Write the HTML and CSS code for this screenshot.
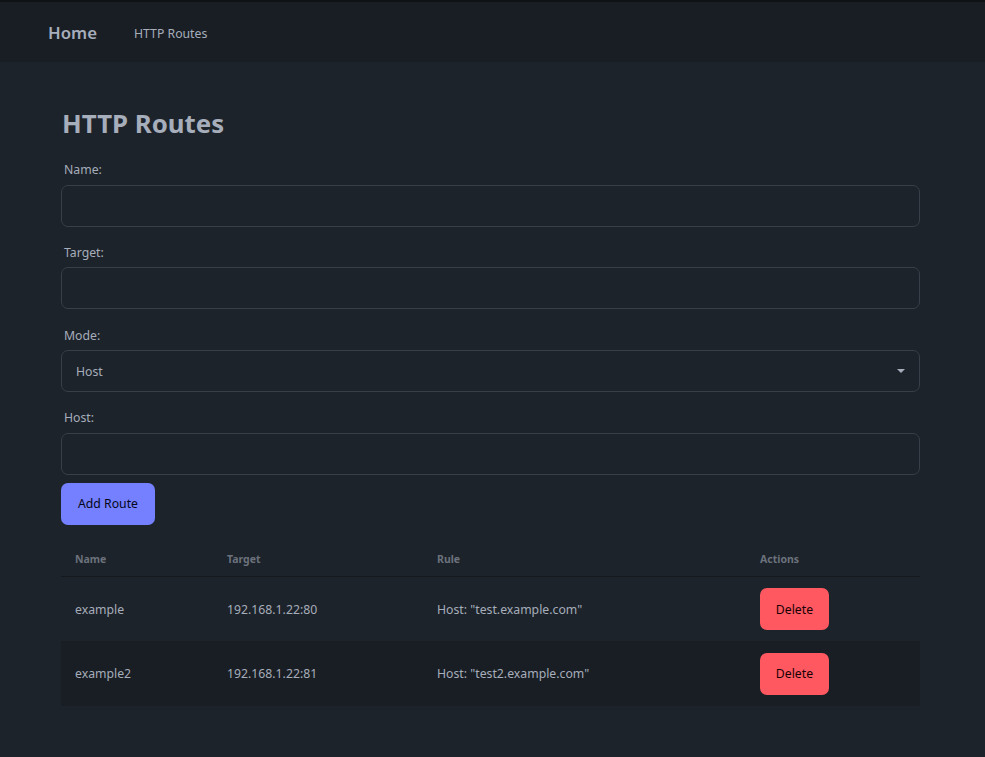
FILE: index.html
```html
<!DOCTYPE html>
<html lang="en">
<head>
<meta charset="utf-8">
<title>HTTP Routes</title>
<link rel="stylesheet" href="styles.css">
</head>
<body>
<header class="navbar">
  <a class="brand" href="#">Home</a>
  <a class="nav-link" href="#">HTTP Routes</a>
</header>
<main class="content">
  <h1 class="title">HTTP Routes</h1>
  <form class="route-form">
    <label class="field-label" for="name">Name:</label>
    <input class="field-input" id="name" type="text">
    <label class="field-label" for="target">Target:</label>
    <input class="field-input" id="target" type="text">
    <label class="field-label" for="mode">Mode:</label>
    <div class="field-input select">
      <span>Host</span>
      <svg class="caret" width="8" height="5" viewBox="0 0 8 5"><path d="M0 0h8L4 4z" fill="#a6adbb"/></svg>
    </div>
    <label class="field-label" for="host">Host:</label>
    <input class="field-input" id="host" type="text">
    <div class="actions-row">
      <button class="btn btn-primary" type="button">Add Route</button>
    </div>
  </form>
  <table class="routes">
    <thead>
      <tr>
        <th class="col-name">Name</th>
        <th class="col-target">Target</th>
        <th class="col-rule">Rule</th>
        <th class="col-actions">Actions</th>
      </tr>
    </thead>
    <tbody>
      <tr>
        <td>example</td>
        <td>192.168.1.22:80</td>
        <td>Host: "test.example.com"</td>
        <td><button class="btn btn-error" type="button">Delete</button></td>
      </tr>
      <tr class="alt">
        <td>example2</td>
        <td>192.168.1.22:81</td>
        <td>Host: "test2.example.com"</td>
        <td><button class="btn btn-error" type="button">Delete</button></td>
      </tr>
    </tbody>
  </table>
</main>
</body>
</html>
```
FILE: styles.css
```css
* { box-sizing: border-box; }
html, body { margin: 0; padding: 0; }
body {
  background: #1d232a;
  color: #a6adbb;
  font-family: "Noto Sans", "Open Sans", sans-serif;
  font-size: 12.25px;
  min-height: 757px;
}
.navbar {
  height: 62px;
  background: #191e24;
  border-top: 2px solid #0f1215;
  display: flex;
  align-items: center;
  padding: 0 0 0 48px;
}
.brand {
  color: #a6adbb;
  text-decoration: none;
  font-size: 16.8px;
  font-weight: 600;
  margin-right: 37px;
}
.nav-link {
  color: #a6adbb;
  text-decoration: none;
  font-size: 12.25px;
  margin-top: 2px;
}
.content {
  padding: 45px 65px 40px 61px;
}
.title {
  margin: 0 0 14px 1px;
  font-size: 25.8px;
  line-height: 32px;
  font-weight: 700;
}
.route-form {
  display: flex;
  flex-direction: column;
}
.field-label {
  display: block;
  padding: 8px 3px 6px;
  margin-top: 9.3px;
  line-height: 17.5px;
  font-size: 12.25px;
}
.field-label:first-child { margin-top: 0; }
.field-input {
  height: 42px;
  width: 100%;
  background: #1d232a;
  border: 1px solid #383f48;
  border-radius: 7px;
  margin: 0;
  padding: 0 14px;
  color: #a6adbb;
  font-family: inherit;
  font-size: 12.25px;
  outline: none;
}
.select {
  display: flex;
  align-items: center;
  justify-content: space-between;
  padding-right: 14px;
}
.caret { margin-top: 1px; }
.actions-row { display: flex; margin-top: 8px; }
.btn {
  height: 42px;
  border: none;
  border-radius: 7px;
  font-family: inherit;
  font-size: 12.25px;
  padding: 0 14px;
  cursor: pointer;
}
.btn-primary {
  background: #7480ff;
  color: #050617;
  width: 94px;
}
.btn-error {
  background: #ff5861;
  color: #160003;
  width: 69px;
}
.routes {
  width: 100%;
  margin-top: 16px;
  border-collapse: collapse;
  font-size: 12.25px;
}
.routes th {
  text-align: left;
  font-size: 10.5px;
  font-weight: 700;
  color: #6b727d;
  padding: 11px 14px 10px;
  border-bottom: 1px solid #15191e;
}
.col-name { width: 152px; }
.col-target { width: 210px; }
.col-rule { width: 323px; }
.routes td {
  padding: 11px 14px;
  height: 65px;
}
.routes tr.alt { background: #191e24; }
```
